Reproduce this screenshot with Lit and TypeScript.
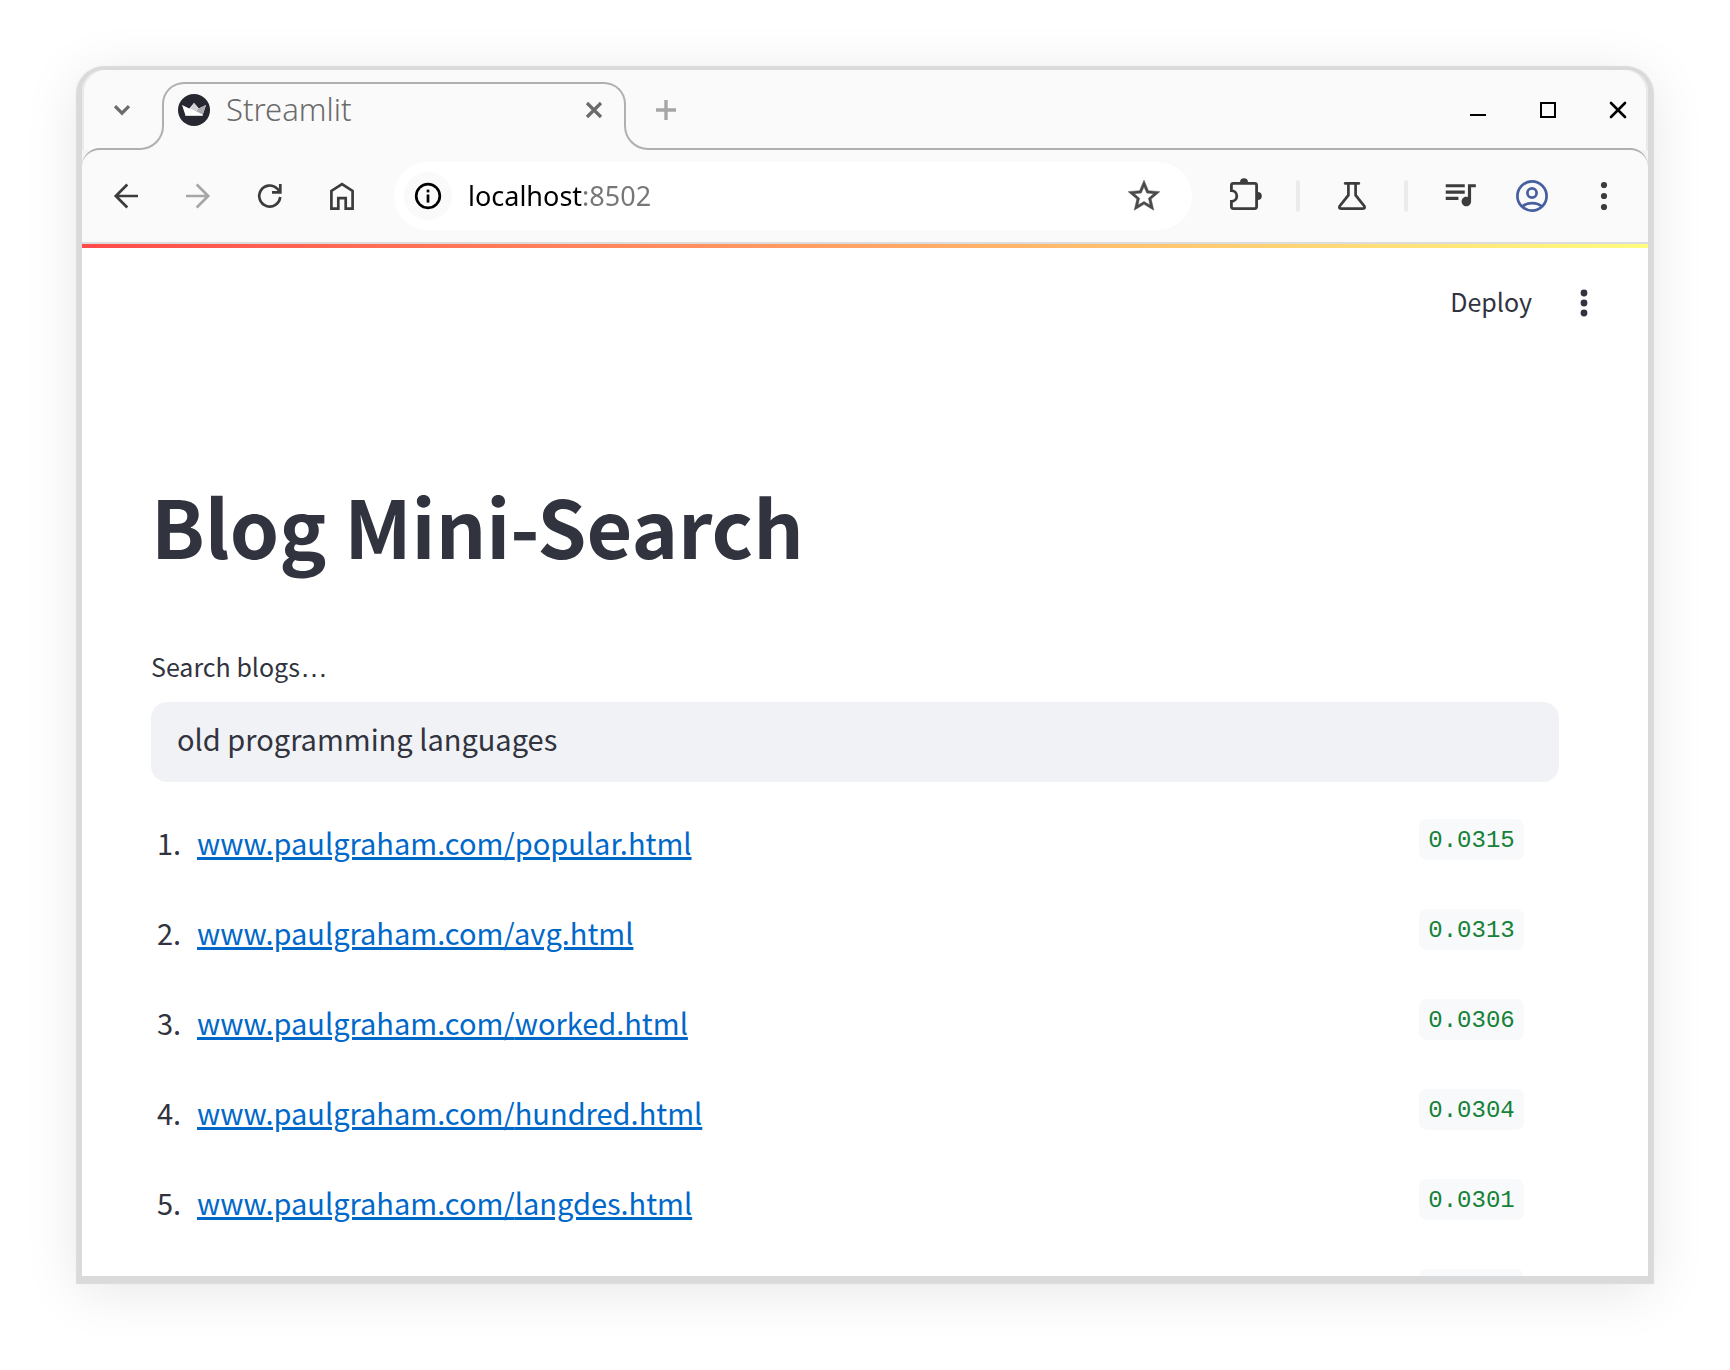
import { LitElement, html, css, svg } from "lit";
import { customElement } from "lit/decorators.js";

interface Result {
  path: string;
  score: string;
}

const RESULTS: Result[] = [
  { path: "popular.html", score: "0.0315" },
  { path: "avg.html", score: "0.0313" },
  { path: "worked.html", score: "0.0306" },
  { path: "hundred.html", score: "0.0304" },
  { path: "langdes.html", score: "0.0301" },
];

// Stroke icons share a 48-unit box; material icons use their own 24-unit box.
const line = (body: unknown, width = 2.7) => html`<svg
  class="icon" viewBox="0 0 48 48" fill="none" stroke="currentColor"
  stroke-width=${width} aria-hidden="true">${body}</svg>`;

const icons = {
  chevron: line(svg`<path d="M17 20.2 24 27.2 31 20.2" stroke-width="3.2"/>`),
  tabClose: line(svg`<path d="M17 17 31 31M31 17 17 31" stroke-width="3.2"/>`),
  plus: line(svg`<path d="M24 14V34M14 24H34" stroke-width="3.4"/>`),
  minimize: line(svg`<path d="M16 29H32" stroke-width="2"/>`),
  maximize: line(svg`<rect x="17" y="17" width="14" height="14" stroke-width="2"/>`),
  close: line(svg`<path d="M17 17 31 31M31 17 17 31" stroke-width="2.6" stroke-linecap="round"/>`),
  back: line(svg`<path d="M36 24H14M25.3 12.5 13.8 24 25.3 35.5"/>`),
  forward: line(svg`<path d="M12 24H34M22.7 12.5 34.2 24 22.7 35.5"/>`),
  reload: line(svg`<path d="M34.2 25A10.5 10.5 0 1 1 31.2 16.6L34.2 19.8"/><path d="M34.3 12V20.4H26"/>`),
  home: line(svg`<path d="M13.4 36.6V18.9L24 12 34.6 18.9V36.6H27.7V26.1H20.3V36.6Z"/>`),
  info: line(svg`<circle cx="24" cy="24" r="11.8"/><path d="M24 22.5V30.6"/><path d="M24 17.6V20.4"/>`),
  extension: line(svg`<path d="M11.4 18.6V13.4Q11.4 11.4 13.4 11.4H34.6Q36.6 11.4 36.6 13.4V34.6Q36.6 36.6 34.6 36.6H13.4Q11.4 36.6 11.4 34.6V29.4A5.4 5.4 0 0 0 11.4 18.6Z"/><path d="M20 10.4A4 4.2 0 0 1 28 10.4ZM37.6 20A4.2 4 0 0 1 37.6 28Z" fill="currentColor" stroke="none"/>`, 2.8),
  flask: line(svg`<path d="M17.2 11.4H30.8" stroke-linecap="round"/><path d="M20.4 11.4V23.2L11.8 34Q10.4 36.6 13 36.6H35Q37.6 36.6 36.2 34L27.6 23.2V11.4"/>`),
  account: line(svg`<circle cx="24" cy="24" r="14.6"/><circle cx="24" cy="21" r="4.6"/><path d="M14 34.8C19 30 29 30 34 34.8"/>`),
  dots: html`<svg class="icon" viewBox="0 0 48 48" fill="currentColor" aria-hidden="true">
    <circle cx="24" cy="13" r="3.1"/><circle cx="24" cy="24" r="3.1"/><circle cx="24" cy="35" r="3.1"/></svg>`,
  menu: html`<svg class="icon" viewBox="0 0 48 48" fill="currentColor" aria-hidden="true">
    <circle cx="24" cy="14" r="3.4"/><circle cx="24" cy="24" r="3.4"/><circle cx="24" cy="34" r="3.4"/></svg>`,
  star: html`<svg class="icon-material" viewBox="0 0 24 24" fill="currentColor" stroke="currentColor" stroke-width="0.3" aria-hidden="true">
    <path d="M22 9.24l-7.19-.62L12 2 9.19 8.63 2 9.24l5.46 4.73L5.82 21 12 17.27 18.18 21l-1.63-7.03L22 9.24zM12 15.4l-3.76 2.27 1-4.28-3.32-2.88 4.38-.38L12 6.1l1.71 4.04 4.38.38-3.32 2.88 1 4.28L12 15.4z"/></svg>`,
  music: html`<svg class="icon-material" viewBox="0 1.5 24 24" fill="currentColor" aria-hidden="true">
    <path d="M15 6H3v2h12V6zm0 4H3v2h12v-2zM3 16h8v-2H3v2zM17 6v8.18c-.31-.11-.65-.18-1-.18-1.66 0-3 1.34-3 3s1.34 3 3 3 3-1.34 3-3V8h3V6h-5z"/></svg>`,
  favicon: html`<svg class="favicon" viewBox="0 0 32 32" aria-hidden="true">
    <circle cx="16" cy="16" r="16" fill="#262730"/>
    <path d="M4 11 11.3 14.6 16 9 20.8 14.6 28 11 24.3 22H7.7Z" fill="#fff"/>
    <path d="M11.8 14.4 16 9 20.8 14.6 25 20.5Z" fill="#d2d2d5"/>
    <path d="M28 11 20.8 14.6 18.6 17.2 24.8 20.6Z" fill="#a9a9ad"/>
    <path d="M7.4 21H24.6L24.3 22H7.7Z" fill="#d8d8da"/></svg>`,
};

@customElement("browser-tabs")
class BrowserTabs extends LitElement {
  static styles = css`
    :host { display: block; }
    .strip {
      display: grid;
      grid-template-columns: 80px 464px 1fr;
      height: 80px;
      margin-bottom: -2px;
      box-sizing: border-box;
      border-radius: 22px 22px 0 0;
      background: #fafafa;
      box-shadow: inset 2px 0 #e9e9e9, inset -2px 0 #e9e9e9;
      color: #6b6b6b;
    }
    .strip > * { grid-row: 1; }
    .base, .edge-left, .edge-right, .edge-tab {
      box-sizing: border-box;
      border: 0 solid #b0b0b0;
      z-index: 1;
    }
    .base { grid-column: 2; align-self: end; height: 2px; margin: 0 -24px; background: #fafafa; }
    .edge-left {
      grid-column: 1; align-self: end; height: 46px; margin: 0 -2px 0 16px;
      border-width: 0 2px 2px 0; border-bottom-right-radius: 24px;
    }
    .edge-tab {
      grid-column: 2; align-self: start; height: 24px; margin-top: 12px;
      border-width: 2px 2px 0 2px; border-radius: 22px 22px 0 0;
    }
    .edge-right {
      grid-column: 3; align-self: end; height: 46px; margin: 0 16px 0 -2px;
      border-width: 0 0 2px 2px; border-bottom-left-radius: 24px;
    }
    .search { grid-column: 1; display: grid; place-items: center; z-index: 2; }
    .tab {
      grid-column: 2; z-index: 2;
      display: flex; align-items: center; gap: 16px; padding: 0 8px 0 16px;
    }
    .title {
      flex: 1; padding-bottom: 2px;
      font: 300 31px/40px "Noto Sans", "Open Sans", sans-serif; color: #6b6b6b;
    }
    .rest {
      grid-column: 3; z-index: 2;
      display: flex; align-items: center; gap: 22px; padding: 0 6px 0 16px;
    }
    .new { margin-right: auto; color: #a6a6a6; }
    .system { color: #000; }
    .favicon { width: 32px; height: 32px; }
    .icon { display: block; width: 48px; height: 48px; }
    button { padding: 0; border: 0; background: none; color: inherit; }
  `;
  render() {
    return html`
      <div class="strip">
        <div class="base"></div>
        <div class="edge-left"></div>
        <div class="edge-tab"></div>
        <div class="edge-right"></div>
        <div class="search"><button aria-label="Search tabs">${icons.chevron}</button></div>
        <div class="tab">
          ${icons.favicon}
          <span class="title">Streamlit</span>
          <button aria-label="Close tab">${icons.tabClose}</button>
        </div>
        <div class="rest">
          <button class="new" aria-label="New tab">${icons.plus}</button>
          <button class="system" aria-label="Minimize">${icons.minimize}</button>
          <button class="system" aria-label="Maximize">${icons.maximize}</button>
          <button class="system" aria-label="Close">${icons.close}</button>
        </div>
      </div>
    `;
  }
}

@customElement("browser-toolbar")
class BrowserToolbar extends LitElement {
  static styles = css`
    :host { display: block; }
    .bar {
      display: flex; align-items: center;
      padding: 12px 8px;
      background: #fafafa;
      border-top: 2px solid #b0b0b0;
      border-bottom: 2px solid #dcdcdc;
      border-radius: 18px 18px 0 0;
      color: #3c3c3c;
    }
    button { padding: 0; border: 0; background: none; color: inherit; }
    .tool { width: 72px; height: 48px; display: grid; place-items: center; }
    .forward { color: #a6a6a6; }
    .account { color: #455f9f; }
    .divider { width: 4px; height: 32px; margin: 0 16px; border-radius: 2px; background: #ebebeb; }
    .address {
      flex: 1; min-width: 0; display: flex; align-items: center; gap: 16px;
      height: 68px; margin: 0 16px; padding: 0 29px 0 10px; box-sizing: border-box;
      background: #fff; border-radius: 34px;
    }
    .info { border-radius: 50%; background: #fafafa; color: #000; }
    .star { color: #4a4a4a; }
    /* The port is dimmed by a two-tone fill clipped to the glyphs. */
    .url {
      flex: 1; min-width: 0; height: 48px; padding: 0 0 2px; border: 0; outline: 0;
      box-sizing: border-box;
      font: 400 27px/46px "Noto Sans", "Open Sans", sans-serif;
      background: linear-gradient(90deg, #000 114px, #777 114px);
      -webkit-background-clip: text; background-clip: text;
      color: transparent; caret-color: #000;
    }
    .icon { display: block; width: 48px; height: 48px; }
    .icon-material { display: block; width: 38px; height: 38px; }
  `;
  render() {
    return html`
      <div class="bar">
        <button class="tool" aria-label="Back">${icons.back}</button>
        <button class="tool forward" aria-label="Forward">${icons.forward}</button>
        <button class="tool" aria-label="Reload">${icons.reload}</button>
        <button class="tool" aria-label="Home">${icons.home}</button>
        <div class="address">
          <button class="info" aria-label="Site information">${icons.info}</button>
          <input class="url" type="text" aria-label="Address" .value=${"localhost:8502"} />
          <button class="star" aria-label="Bookmark">${icons.star}</button>
        </div>
        <button class="tool" aria-label="Extensions">${icons.extension}</button>
        <span class="divider"></span>
        <button class="tool" aria-label="Labs">${icons.flask}</button>
        <span class="divider"></span>
        <button class="tool" aria-label="Media">${icons.music}</button>
        <button class="tool account" aria-label="Profile">${icons.account}</button>
        <button class="tool" aria-label="Menu">${icons.dots}</button>
      </div>
    `;
  }
}

@customElement("search-page")
class SearchPage extends LitElement {
  static styles = css`
    :host {
      display: block; overflow: hidden; background: #fff; color: #31333f;
      font: 400 29px/46px "Noto Sans CJK SC", "Source Sans Pro", sans-serif;
    }
    .accent { height: 4px; background: linear-gradient(90deg, #ff4b4b, #fffd80); }
    .header { display: flex; align-items: center; justify-content: flex-end; gap: 28px; padding: 29px 40px 0 0; }
    button { padding: 0; border: 0; background: none; color: inherit; font: inherit; }
    .deploy { padding-bottom: 4px; font-size: 25px; line-height: 48px; }
    .icon { display: block; width: 48px; height: 48px; }
    .content { padding: 148px 89px 0 69px; }
    h1 { margin: 0; font-size: 79px; line-height: 96px; font-weight: 700; }
    .label { display: block; margin-top: 73px; font-size: 25px; line-height: 40px; }
    .dots { font-family: "Liberation Sans", sans-serif; font-size: 28px; }
    .query {
      display: block; width: 100%; height: 80px; margin-top: 14px; padding: 0 26px 8px;
      box-sizing: border-box; border: 0; outline: 0; border-radius: 16px;
      background: #f0f2f6; color: inherit; font: inherit;
    }
    .results { list-style: none; margin: 0; padding: 37px 35px 0 6px; }
    .row { display: flex; align-items: flex-start; height: 90px; }
    .rank { width: 40px; }
    a { color: #0068c9; text-decoration: underline; text-decoration-thickness: 3px; text-underline-offset: 2px; }
    .score {
      margin-left: auto; width: 105px; height: 41px; border-radius: 8px; background: #f8f9fb;
      color: #158237; text-align: center;
      font: 400 24px/44px "Liberation Mono", monospace;
    }
  `;
  render() {
    return html`
      <div class="accent"></div>
      <div class="header">
        <button class="deploy">Deploy</button>
        <button aria-label="Main menu">${icons.menu}</button>
      </div>
      <div class="content">
        <h1>Blog Mini-Search</h1>
        <label class="label" for="query">Search blogs<span class="dots">…</span></label>
        <input class="query" id="query" type="text" .value=${"old programming languages"} />
        <ol class="results">
          ${RESULTS.map((r, i) => html`
            <li class="row">
              <span class="rank">${i + 1}.</span>
              <a href="http://www.paulgraham.com/${r.path}">www.paulgraham.com/${r.path}</a>
              <code class="score">${r.score}</code>
            </li>`)}
          <li class="row" aria-hidden="true"><code class="score"></code></li>
        </ol>
      </div>
    `;
  }
}

@customElement("app-root")
class AppRoot extends LitElement {
  static styles = css`
    :host {
      display: flex; box-sizing: border-box; height: 100vh;
      padding: 70px 82px 94px; background: #fff;
    }
    .window {
      flex: 1; min-width: 0; display: flex; flex-direction: column;
      border-radius: 22px 22px 0 0; background: #f4f4f4;
      box-shadow: 0 2px 1px 6px #dadada, 0 10px 56px 4px rgba(0, 0, 0, 0.1);
    }
    .page { flex: 1; min-height: 0; }
  `;
  render() {
    return html`
      <div class="window">
        <browser-tabs></browser-tabs>
        <browser-toolbar></browser-toolbar>
        <search-page class="page"></search-page>
      </div>
    `;
  }
}
